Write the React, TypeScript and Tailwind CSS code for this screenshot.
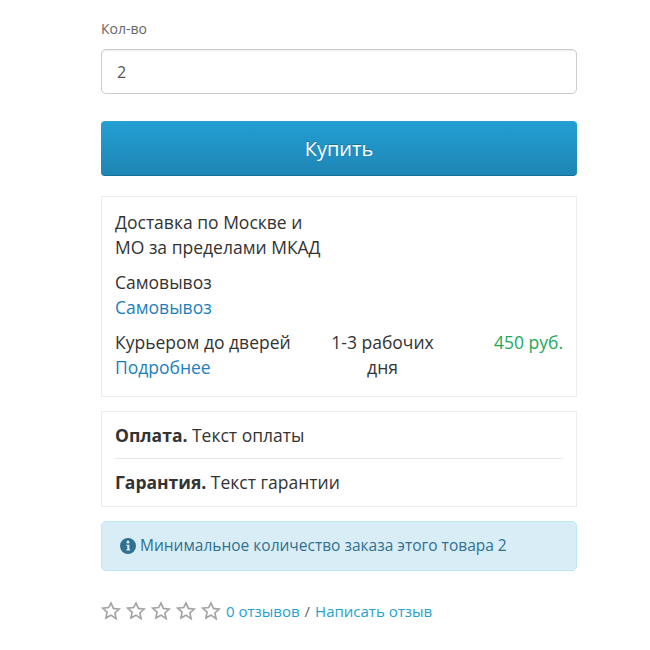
const FONT = "font-['Open_Sans',sans-serif]";

function Star() {
  return (
    <svg viewBox="0 0 24 24" className="h-[20px] w-[20px] shrink-0" fill="#fff" stroke="#a3a3a3" strokeWidth="2" strokeLinejoin="miter">
      <path d="M12 2.6l2.9 6.3 6.9.8-5.1 4.7 1.4 6.8L12 17l-6.1 3.2 1.4-6.8-5.1-4.7 6.9-.8z" />
    </svg>
  );
}

export default function App() {
  return (
    <div className={`${FONT} h-[650px] w-[650px] overflow-hidden bg-white pl-[101px] pr-[73px] pt-[20px]`}>
      {/* Quantity */}
      <label className="block text-[14px] leading-[18px] text-[#666]">Кол-во</label>
      <div className="mt-[11px] flex h-[45px] items-center rounded-[5px] border border-[#ccc] bg-white px-[15px] text-[16px] text-[#555] shadow-[inset_0_1px_1px_rgba(0,0,0,0.075)]">
        2
      </div>

      <button className="mt-[27px] flex h-[55px] w-full items-center justify-center rounded-[4px] border-t border-t-[#2aa3d5] border-b border-b-[#176f96] bg-gradient-to-b from-[#229ed2] to-[#1f86b5] text-[20px] text-white [text-shadow:0_-1px_0_rgba(0,0,0,0.25)]">
        Купить
      </button>

      {/* Delivery */}
      <div className="mt-[20px] h-[201px] border border-[#ececec] px-[13px] pt-[13px] text-[17.5px] leading-[25px] text-[#333]">
        <div>
          Доставка по Москве и
          <br />
          МО за пределами МКАД
        </div>
        <div className="mt-[10px]">Самовывоз</div>
        <a className="block text-[#1c7fbd]">Самовывоз</a>
        <div className="mt-[10px] flex">
          <div className="w-[200px]">
            <div>Курьером до дверей</div>
            <a className="block text-[#1c7fbd]">Подробнее</a>
          </div>
          <div className="w-[135px] text-center">1-3 рабочих дня</div>
          <div className="flex-1 text-right text-[#23a95a]">450 руб.</div>
        </div>
      </div>

      {/* Payment and warranty */}
      <div className="mt-[14px] h-[96px] border border-[#ececec] px-[13px] text-[17.5px] text-[#333]">
        <div className="flex h-[47px] items-center border-b border-[#e8e8e8]">
          <span><b>Оплата.</b> Текст оплаты</span>
        </div>
        <div className="flex h-[46px] items-center">
          <span><b>Гарантия.</b> Текст гарантии</span>
        </div>
      </div>

      {/* Notice */}
      <div className="mt-[14px] flex h-[50px] items-center rounded-[5px] border border-[#bce8f1] bg-[#d9edf7] pl-[18px] text-[15.5px] text-[#31708f]">
        <svg viewBox="0 0 16 16" className="mr-[4px] h-[16px] w-[16px] shrink-0" fill="#31708f">
          <path d="M8 0a8 8 0 100 16A8 8 0 008 0zm1.6 12.6H6.4v-1.3h.9V8H6.4V6.7h3v4.6h.7v1.3zM8 5.4a1.5 1.5 0 110-3 1.5 1.5 0 010 3z" />
        </svg>
        Минимальное количество заказа этого товара 2
      </div>

      {/* Rating */}
      <div className="mt-[29px] flex items-center text-[15px] text-[#666]">
        <div className="flex gap-[5px]">
          <Star />
          <Star />
          <Star />
          <Star />
          <Star />
        </div>
        <a className="ml-[5px] text-[#23a1d1]">0 отзывов</a>
        <span className="mx-[5px]">/</span>
        <a className="text-[#23a1d1]">Написать отзыв</a>
      </div>
    </div>
  );
}
